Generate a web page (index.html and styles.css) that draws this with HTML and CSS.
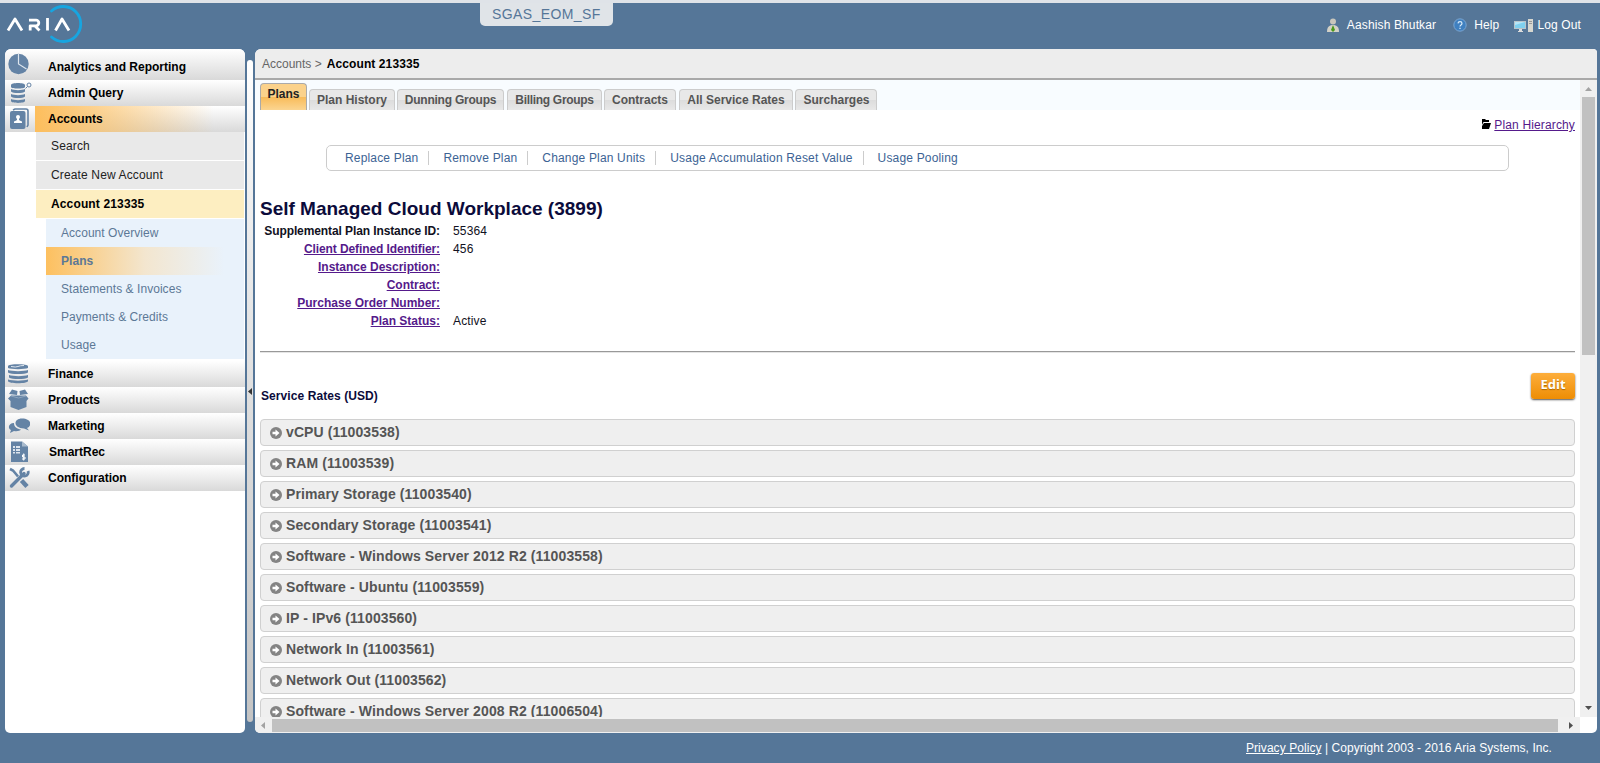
FILE: index.html
```html
<!DOCTYPE html>
<html lang="en">
<head>
<meta charset="utf-8">
<title>Account 213335 - Plans</title>
<link rel="stylesheet" href="styles.css">
</head>
<body>
<div class="app">
  <header class="header">
    <svg class="logo" width="78" height="42" viewBox="0 0 78 42" fill="none">
      <path d="M45.500 7A17.500 17.500 0 1 1 45.500 33" stroke="#17a5e0" stroke-width="2.800" stroke-linecap="round"/>
      <g stroke="#fff" stroke-width="2.800" stroke-linejoin="round">
        <path d="M2 26.500 9 15l7 11.500M24.200 26.500V21.800H30a2.700 2.700 0 0 0 0-5.600h-7M29 22l4.500 4.500M41.500 14V26.500M49.500 26.500 56 15l7 11.500"/>
      </g>
    </svg>
    <div class="instance"><span>SGAS_EOM_SF</span></div>
    <nav class="usernav">
      <a class="user"><svg width="12" height="16" viewBox="0 0 12 16"><path d="M0 15c0-5 2-7 6-7s6 2 6 7z" fill="#d3d1c6"/><circle cx="6" cy="4.500" r="3" fill="#c9c6bc"/><path d="m6 8-2 5 2 2 2-2z" fill="#4b9a1c"/></svg><span>Aashish Bhutkar</span></a>
      <a class="help"><svg width="14" height="14" viewBox="0 0 14 14"><circle cx="7" cy="7" r="6.200" fill="#3f80c0" stroke="#7ba5d0"/><path d="M5 5.400c.2-2.300 4-2.200 4 0 0 1.500-2 1.500-2 3M7 9.700v1.400" fill="none" stroke="#d9ebfa" stroke-width="1.200"/></svg><span>Help</span></a>
      <a class="logout"><svg width="20" height="15" viewBox="0 0 20 15"><path d="M0 3h12v8H0z" fill="#b9c4ca"/><path d="M1 4h10v6H1z" fill="#7fd0ef"/><path d="M1 4h10L1 7z" fill="#b5e5f7"/><path d="M5 11h3v2H5zM4 13h5v1H4z" fill="#ddd"/><path d="M14 1h5v13h-5z" fill="#d7d7d0"/><path d="M15 3h3v1h-3zM15 5h3v1h-3z" fill="#999"/></svg><span>Log Out</span></a>
    </nav>
  </header>
  <main class="main">
    <aside class="sidebar">
      <a class="mod first"><i><svg width="22" height="22" viewBox="0 0 22 22"><circle cx="10.500" cy="11" r="10.200" fill="#6483a5"/><path d="M10.500 1v10l8 5" fill="none" stroke="#dde5ee" stroke-width="1.200"/></svg></i><b>Analytics and Reporting</b></a>
      <a class="mod"><i><svg width="24" height="22" viewBox="0 0 24 22"><g fill="#6483a5"><path d="M3 3C3 .3 17 .3 17 3v2c0 2-14 2-14 0zM3 7c3 1.500 11 1.500 14 0v2.500c-2 2-12 2-14 0zM3 12c3 1.500 11 1.500 14 0v2.500c-2 2-12 2-14 0zM3 17c3 1.500 11 1.500 14 0v2c0 2.500-14 2.500-14 0z"/></g><circle cx="21" cy="3" r="2" fill="none" stroke="#6483a5"/><path d="m19.500 4.500-2 2" stroke="#6483a5"/></svg></i><b>Admin Query</b></a>
      <a class="mod active"><i><svg width="22" height="22" viewBox="0 0 22 22"><path d="M5 2 7 1h11q2 0 2 2v14l-1 2" fill="none" stroke="#6483a5" stroke-width="1.600"/><rect x="2" y="3" width="15.500" height="18" rx="2" fill="#6483a5"/><circle cx="10" cy="9" r="2" fill="#fff"/><path d="M6 15v-1.500q2-1 3-1.500v-2h2v2q1 .5 3 1.500V15z" fill="#fff"/></svg></i><b>Accounts</b></a>
      <div class="level2">
        <a>Search</a>
        <a>Create New Account</a>
        <a class="open">Account 213335</a>
      </div>
      <div class="level3">
        <a>Account Overview</a>
        <a class="current">Plans</a>
        <a>Statements &amp; Invoices</a>
        <a>Payments &amp; Credits</a>
        <a>Usage</a>
      </div>
      <a class="mod"><i><svg width="22" height="22" viewBox="0 0 22 22"><g fill="#6483a5"><path d="M0 3C0 .6 20 .6 20 3v2c-3 1.500-17 1.500-20 0zM0 7c4 1.500 16 1.500 20 0v2.500c-3 2-17 2-20 0zM1 12c4 1.500 15 1.500 19 0v2.500c-3 2-16 2-19 0zM0 16.500c4 1.500 16 1.500 20 0V18c0 3-20 3-20 0z"/></g><path d="M3 3.500q5 1 7 0t6-1" fill="none" stroke="#dde5ee"/></svg></i><b>Finance</b></a>
      <a class="mod"><i><svg width="22" height="22" viewBox="0 0 22 22"><g fill="#6483a5"><path d="M4 .5 9.500 2 9 6 1 5zM11.500 2 17 .5l3 4.500-8 1zM3 6.500h15l2.500 3-2 2.500v6l-8 3-8-3v-6L0 9.500z"/></g><path d="m3 7 7.500 2L18 7" fill="none" stroke="#8ba3bd"/></svg></i><b>Products</b></a>
      <a class="mod"><i><svg width="22" height="22" viewBox="0 0 22 22"><g fill="#6483a5"><path d="M6 8C1 8-1 13 3 15l-1 3 4-2c3 .5 6 0 7-1.500-4-.5-7-2.500-7-6.500z"/><path d="M14 3.500c10 0 10 8 5 9.500l2 2.500-5-2C5 13.500 5 3.500 14 3.500z"/></g></svg></i><b>Marketing</b></a>
      <a class="mod shift"><i><svg width="22" height="22" viewBox="0 0 22 22"><path d="M3 .5h11l6 5V21H3z" fill="#6483a5"/><path d="M14 .5v5h6" fill="#a9bbce"/><path d="M5 5h2v2H5zM8 5h4v2H8zM5 8h2v2H5zM8 8h4v2H8zM5 11h2v1.500H5zM8 11h4v1.500H8z" fill="#dde5ee"/><path d="M17 14h-2.500v2H17v2h-3m1.700-5.500v7" fill="none" stroke="#fff"/></svg></i><b>SmartRec</b></a>
      <a class="mod"><i><svg width="22" height="22" viewBox="0 0 22 22" fill="none" stroke="#6483a5"><path d="M3.500 19 16 6.500" stroke-width="3.400" stroke-linecap="round"/><path d="M20 4a3.800 3.800 0 1 1-3.500-2.500" stroke-width="2.800"/><path d="m2 2 3 1.500 5 6" stroke-width="2.600"/><path d="m13.500 13.500 5.500 6" stroke-width="4.500"/></svg></i><b>Configuration</b></a>
    </aside>
    <div class="splitter"><svg width="4" height="7" viewBox="0 0 4 7"><path d="M4 0v7L0 3.500z" fill="#333"/></svg></div>
    <section class="content">
      <div class="crumbs"><span>Accounts &gt;</span><b>Account 213335</b></div>
      <div class="frame">
        <div class="view">
          <div class="tabs">
            <a class="on t0"><span>Plans</span></a><a class="t1"><span>Plan History</span></a><a class="t2"><span>Dunning Groups</span></a><a class="t3"><span>Billing Groups</span></a><a class="t4"><span>Contracts</span></a><a class="t5"><span>All Service Rates</span></a><a class="t6"><span>Surcharges</span></a>
          </div>
          <div class="hier"><svg width="10" height="11" viewBox="0 0 10 11"><path d="M1 0h3l1 1h3v2H2.500L1 6zM3 4h7L8 10H1V7z"/></svg><a>Plan Hierarchy</a></div>
          <div class="actions"><a>Replace Plan</a><a>Remove Plan</a><a>Change Plan Units</a><a>Usage Accumulation Reset Value</a><a>Usage Pooling</a></div>
          <h1 class="title"><span>Self Managed Cloud Workplace (3899)</span></h1>
          <dl class="facts">
            <dt class="tight"><span>Supplemental Plan Instance ID:</span></dt><dd>55364</dd>
            <dt class="tight"><a>Client Defined Identifier:</a></dt><dd>456</dd>
            <dt><a>Instance Description:</a></dt><dd></dd>
            <dt><a>Contract:</a></dt><dd></dd>
            <dt><a>Purchase Order Number:</a></dt><dd></dd>
            <dt><a>Plan Status:</a></dt><dd>Active</dd>
          </dl>
          <div class="rule"></div>
          <div class="rates"><b>Service Rates (USD)</b><a class="edit"><span>Edit</span></a></div>
          <svg class="defs" width="0" height="0"><symbol id="go" viewBox="0 0 12 12"><circle cx="6" cy="6" r="6" fill="#848484"/><path d="M2.500 4.800h3V2.500L9.500 6 5.500 9.500V7.200h-3z" fill="#fff"/></symbol></svg>
          <div class="list">
            <a><svg width="12" height="12"><use href="#go"/></svg><span>vCPU (11003538)</span></a>
            <a><svg width="12" height="12"><use href="#go"/></svg><span>RAM (11003539)</span></a>
            <a><svg width="12" height="12"><use href="#go"/></svg><span>Primary Storage (11003540)</span></a>
            <a><svg width="12" height="12"><use href="#go"/></svg><span>Secondary Storage (11003541)</span></a>
            <a><svg width="12" height="12"><use href="#go"/></svg><span>Software - Windows Server 2012 R2 (11003558)</span></a>
            <a><svg width="12" height="12"><use href="#go"/></svg><span>Software - Ubuntu (11003559)</span></a>
            <a><svg width="12" height="12"><use href="#go"/></svg><span>IP - IPv6 (11003560)</span></a>
            <a><svg width="12" height="12"><use href="#go"/></svg><span>Network In (11003561)</span></a>
            <a><svg width="12" height="12"><use href="#go"/></svg><span>Network Out (11003562)</span></a>
            <a><svg width="12" height="12"><use href="#go"/></svg><span>Software - Windows Server 2008 R2 (11006504)</span></a>
          </div>
        </div>
        <div class="vbar"><svg width="17" height="17"><path d="m5 11 3.500-4 3.500 4z" fill="#a3a3a3"/></svg><div class="vthumb"></div><svg width="17" height="17"><path d="m5 6 3.500 4L12 6z" fill="#505050"/></svg></div>
        <div class="hbar"><svg width="17" height="16"><path d="m10 5-4 3.500 4 3.500z" fill="#a3a3a3"/></svg><div class="hthumb"></div><svg width="22" height="16"><path d="m11 5 4 3.500-4 3.500z" fill="#505050"/></svg></div>
      </div>
    </section>
  </main>
  <footer class="footer"><span><a>Privacy Policy</a> | Copyright 2003 - 2016 Aria Systems, Inc.</span></footer>
</div>
</body>
</html>
```
FILE: styles.css
```css
*{box-sizing:border-box}
body{margin:0;background:#557698;font:12px "Liberation Sans",Arial,sans-serif;color:#000;overflow:hidden}
svg{display:block;flex:none}
.app{height:763px;display:flex;flex-direction:column;border-top:3px solid #dfe3e8}
.header{height:46px;flex:none;display:flex;align-items:flex-start;color:#fff}
.logo{margin:1px 0 0 6px}
.instance{margin-left:396px;width:133px;height:23px;background:#e0e4e8;border-radius:0 0 5px 5px;color:#557698;font-size:14px;letter-spacing:.4px;line-height:22px;padding-left:12px}
.usernav{margin-left:auto;padding:13px 19px 0 0;display:flex;letter-spacing:.13px}
.usernav a{display:flex;align-items:center;height:18px}
.user svg{margin-right:8px}
.help{margin:0 15px 0 17px}
.help svg{margin-right:7px}
.logout svg{margin-right:3px}
.main{height:684px;flex:none;display:flex;padding:0 3px 0 5px}
.sidebar{width:240px;background:#fff;border-radius:6px 6px 5px 5px;overflow:hidden}
.mod{display:flex;height:26px;line-height:27px;background:linear-gradient(#fff,#d9d9d9)}
.mod i{width:30px;padding:2px 0 0 3px;flex:none}
.mod b{flex:1;padding-left:13px}
.first{height:31px;line-height:37px}
.first i{padding-top:4px}
.shift b{padding-left:14px}
.active b{background:linear-gradient(90deg,#fdbe5c,rgba(253,190,92,.55) 40%,rgba(253,190,92,0) 85%)}
.level2{padding:0 1px 0 31px}
.level2 a{display:block;height:28px;line-height:28px;margin-bottom:1px;padding-left:15px;background:#e9e9e9;color:#222;letter-spacing:.14px}
.level2 .open{background:#fdeec1;font-weight:bold;color:#000}
.level3{margin:0 1px 2px 41px;background:#e9f2fb;letter-spacing:.05px}
.level3 a{display:block;height:28px;line-height:28px;padding-left:15px;color:#5c7896}
.level3 .current{font-weight:bold;background:linear-gradient(90deg,#fdc05f,#f3e6cf 50%,#e9f2fb 90%)}
.splitter{width:6px;margin:11px 2px 11px;background:linear-gradient(#fff,#f0f0f0 20%,#c4c4c4);border-radius:3px;display:flex;align-items:center;padding-left:1px}
.content{flex:1;border-radius:6px 4px 5px 5px;overflow:hidden;background:#fff}
.crumbs{height:31px;background:#ededed;border-bottom:2px solid #a9a9a9;line-height:31px;padding-left:7px;color:#666;display:flex;gap:5px}
.crumbs b{color:#000;letter-spacing:.1px}
.frame{display:grid;grid-template:637px 16px/1325px 17px}
.view{overflow:hidden}
.tabs{height:30px;background:#f8fcff;display:flex;align-items:flex-end;padding-left:5px}
.tabs a{height:21px;border:1px solid #ccc;border-bottom:0;border-radius:4px 4px 0 0;background:linear-gradient(#e8e8e8 50%,#dcdcdc 50%,#e8e8e8);color:#555;font-weight:bold;text-align:center;line-height:20px;margin-right:2px}
.tabs .on{height:27px;background:linear-gradient(#fbd28b 50%,#f8bb59 50%,#fbd591);border-color:#aaa;color:#222}
.tabs .t0{width:47px}
.tabs .t1{width:86px}
.tabs .t2{width:107px;margin-right:3px;letter-spacing:-.23px}
.tabs .t3{width:95px;letter-spacing:-.3px}
.tabs .t4{width:72px;margin-right:3px}
.tabs .t5{width:114px}
.tabs .t6{width:82px;padding-left:1px}
.hier{height:35px;display:flex;justify-content:flex-end;padding:8px 5px 0 0;letter-spacing:.14px}
.hier svg{margin:1px 3px 0 0}
.hier a,.facts a{color:#551a8b;text-decoration:underline}
.actions{margin:0 71px;height:26px;border:1px solid #ccc;border-radius:5px;display:flex;align-items:center;padding-left:4px;letter-spacing:.17px}
.actions a{color:#3c6394;line-height:14px;padding:0 10px 0 14px;border-right:1px solid #ccc}
.actions a:last-child{border:0}
.title{margin:25px 0 0 5px;font-size:19px;line-height:26px;color:#0b0b3b}
.facts{margin:0;display:grid;grid-template-columns:185px 1fr;column-gap:13px;grid-auto-rows:18px;line-height:18px;color:#112}
.facts dt{text-align:right;font-weight:bold}
.facts .tight{letter-spacing:-.1px}
.facts dd{margin:0;letter-spacing:.15px}
.rule{margin:21px 5px 0;height:2px;border-top:1px solid #999;border-bottom:1px solid #e5e5e5}
.rates{height:66px;display:flex;justify-content:space-between;padding:20px 5px 0 6px;color:#0b0b3b}
.rates b{padding-top:16px;letter-spacing:.08px}
.edit{width:44px;height:26px;border-radius:3px;background:linear-gradient(#fdae3c,#ee8d04);box-shadow:0 1px 2px #555;color:#fff;font:bold 13px/23px "Open Sans","Noto Sans",sans-serif;text-align:center;text-shadow:0 1px 1px #a60}
.defs{position:absolute}
.list{padding:0 5px;display:grid;grid-auto-rows:27px;gap:4px}
.list a{border:1px solid #d0d0d0;border-radius:4px;background:#efefef;display:flex;align-items:center;padding-left:9px;gap:4px;font-size:14px;font-weight:bold;letter-spacing:.11px;color:#555}
.list span{padding-bottom:2px}
.vbar{background:#f0f0f0;display:flex;flex-direction:column}
.vthumb{height:258px;margin:0 2px auto;background:#c1c1c1}
.hbar{background:#f0f0f0;display:flex}
.hthumb{flex:1;margin:2px 0 1px;background:#c1c1c1}
.footer{color:#fff;display:flex;justify-content:flex-end;padding:8px 48px 0 0;letter-spacing:.06px}
.footer a{text-decoration:underline}
```
